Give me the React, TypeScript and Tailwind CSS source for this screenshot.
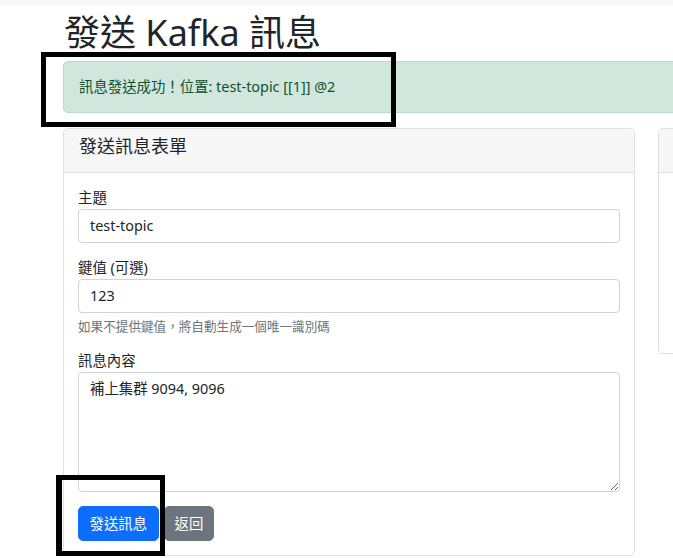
import React from "react";

const FONT = '"Noto Sans", "Noto Sans CJK TC", sans-serif';

export default function App() {
  return (
    <div
      className="relative w-[673px] h-[558px] overflow-hidden bg-white text-[#212529]"
      style={{ fontFamily: FONT }}
    >
      <div className="h-[5px] bg-[#f8f8f8]" />
      <div className="pl-[63px] pt-[6px] w-[1300px]">
        <h1 className="text-[36px] leading-[43px] font-normal mb-[7px] pl-[1px]">發送 Kafka 訊息</h1>
        <div className="w-[1100px] h-[52px] rounded-[5px] border border-[#badbcc] bg-[#d1e7dd] text-[#0f5132] text-[14.4px] leading-[21.6px] px-[15px] py-[14.4px] mb-[15px]">
          訊息發送成功！位置: test-topic [[1]] @2
        </div>
        <div className="flex gap-[23px] items-start">
          <div className="w-[572px] border border-[#dfdfdf] rounded-[5px] bg-white">
            <div className="h-[44px] bg-[#f7f7f7] border-b border-[#dfdfdf] rounded-t-[5px] px-[15px] pt-[7px]">
              <div className="text-[18px] leading-[21.6px] font-normal">發送訊息表單</div>
            </div>
            <div className="px-[14px] pt-[14.4px] pb-[14px]">
              <div className="mb-[14.4px]">
                <div className="text-[14.4px] leading-[21.6px]">主題</div>
                <input
                  readOnly
                  value="test-topic"
                  className="block w-[542px] h-[34px] border border-[#ced4da] rounded-[4px] px-[11px] text-[14.4px] text-[#212529] outline-none"
                  style={{ fontFamily: FONT }}
                />
              </div>
              <div className="mb-[14.4px]">
                <div className="text-[14.4px] leading-[21.6px]">鍵值 (可選)</div>
                <input
                  readOnly
                  value="123"
                  className="block w-[542px] h-[34px] border border-[#ced4da] rounded-[4px] px-[11px] text-[14.4px] text-[#212529] outline-none"
                  style={{ fontFamily: FONT }}
                />
                <div className="mt-[3.6px] text-[12.6px] leading-[19px] text-[#6c757d]">
                  如果不提供鍵值，將自動生成一個唯一識別碼
                </div>
              </div>
              <div className="mb-[14.4px]">
                <div className="text-[14.4px] leading-[21.6px]">訊息內容</div>
                <textarea
                  readOnly
                  defaultValue="補上集群 9094, 9096"
                  className="block w-[542px] h-[120px] border border-[#ced4da] rounded-[4px] px-[11px] py-[5.4px] text-[14.4px] leading-[21.6px] text-[#212529] outline-none resize-y"
                  style={{ fontFamily: FONT }}
                />
              </div>
              <div className="flex gap-[5px]">
                <button className="h-[35px] px-[10.5px] rounded-[5px] bg-[#0d6efd] border border-[#0d6efd] text-white text-[14.4px] leading-[21.6px]">
                  發送訊息
                </button>
                <button className="h-[35px] px-[10px] rounded-[5px] bg-[#6c757d] border border-[#6c757d] text-white text-[14.4px] leading-[21.6px]">
                  返回
                </button>
              </div>
            </div>
          </div>
          <div className="w-[400px] h-[226px] border border-[#dfdfdf] rounded-[5px] bg-white">
            <div className="h-[44px] bg-[#f7f7f7] border-b border-[#dfdfdf] rounded-t-[5px]" />
          </div>
        </div>
      </div>
      <div className="absolute left-[41px] top-[52px] w-[355px] h-[75px] border-[5px] border-black" />
      <div className="absolute left-[56px] top-[475px] w-[109px] h-[81px] border-[5px] border-l-[6px] border-black" />
    </div>
  );
}
